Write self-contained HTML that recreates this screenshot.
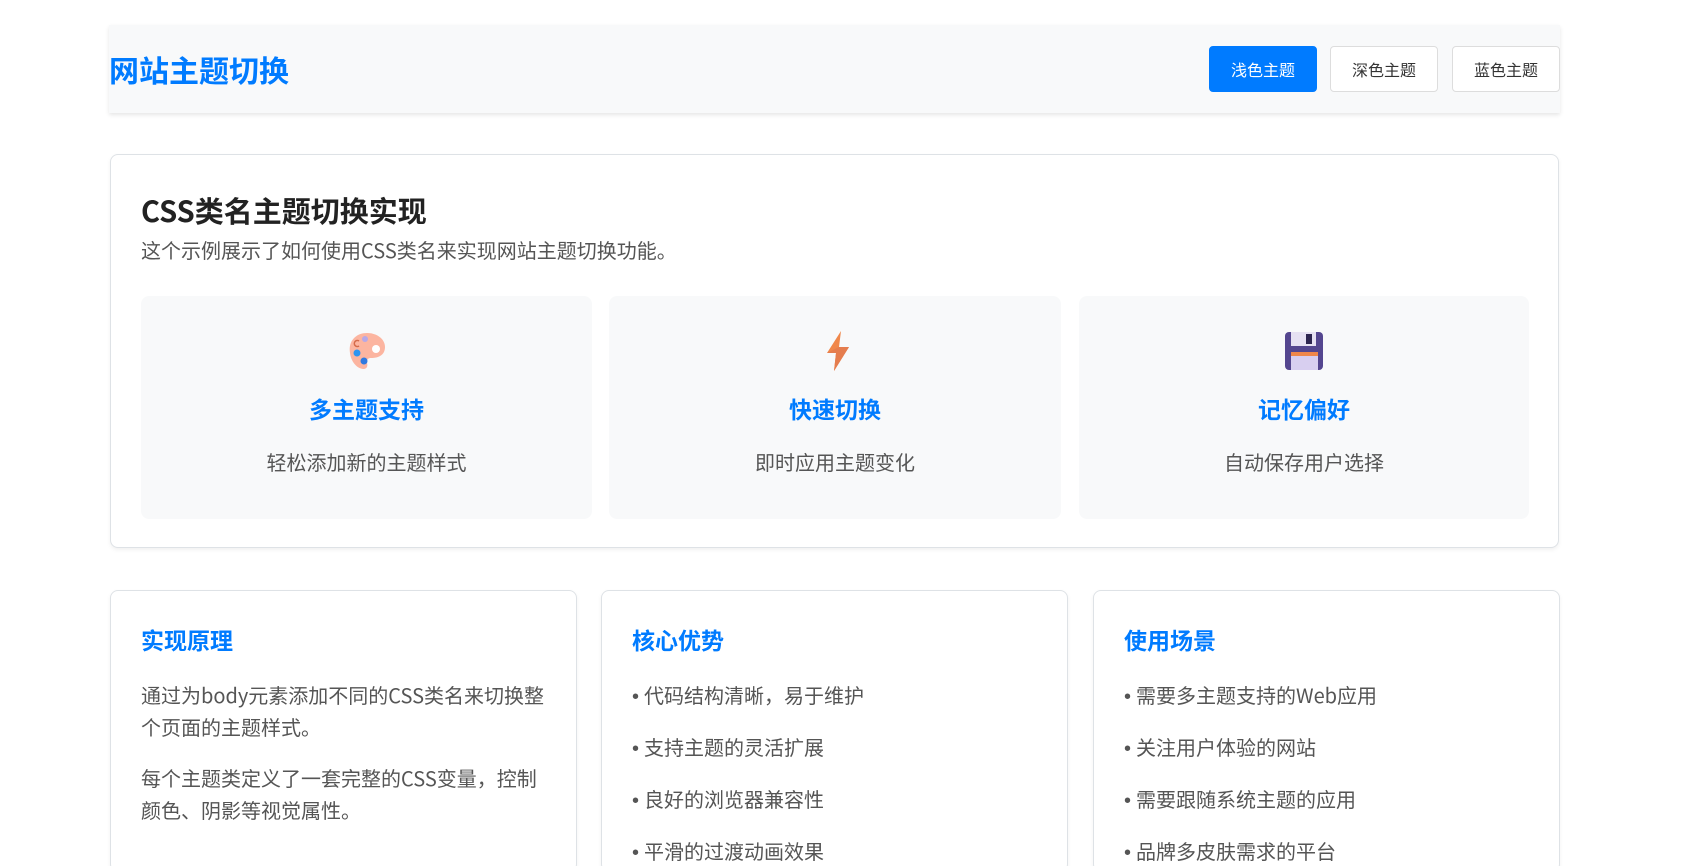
<!DOCTYPE html>
<html><head><meta charset="utf-8"><style>
*{box-sizing:border-box;margin:0;padding:0}
html{width:1681px;height:866px;overflow:hidden}
body{width:1681px;height:866px;overflow:hidden;background:#fff;font-family:"Noto Sans CJK SC","Liberation Sans",sans-serif;position:relative}
.hdr{position:absolute;left:109px;top:25px;width:1451px;height:88px;background:#f8f9fa;box-shadow:0 2px 4px rgba(0,0,0,.1)}
.hdr h1{position:absolute;left:0;top:0;line-height:88px;font-size:30px;font-weight:700;color:#007bff}
.btn{position:absolute;top:21px;height:46px;width:108px;border:1px solid #ddd;border-radius:4px;background:#fff;font-size:16px;color:#333;text-align:center;line-height:44px}
.btn.on{background:#007bff;border-color:#007bff;color:#fff}
.card{position:absolute;background:#fff;border:1px solid #dee2e6;border-radius:8px;box-shadow:0 2px 4px rgba(0,0,0,.06)}
.main{left:110px;top:154px;width:1449px;height:394px}
.main h2{position:absolute;left:30px;top:35px;font-size:29px;font-weight:700;color:#222;line-height:40px}
.main p{position:absolute;left:30px;top:81px;font-size:20px;color:#555;line-height:28px}
.f{position:absolute;top:141px;height:223px;background:#f8f9fa;border-radius:8px;text-align:center}
.f svg{position:absolute;left:50%;top:35px;margin-left:-20px}
.f h3{position:absolute;left:0;right:0;top:96px;font-size:23px;color:#007bff;font-weight:700;line-height:32px}
.f p{position:absolute;left:0;right:0;top:152px;font-size:20px;color:#555;line-height:28px}
.b{top:590px;height:282px;width:467px}
.b h3{position:absolute;left:30px;top:32px;font-size:23px;color:#007bff;font-weight:700;line-height:32px}
.b .t{position:absolute;left:30px;right:30px;top:88px;font-size:20px;color:#555;line-height:32px}
.b .t div{margin-bottom:19px}
.b ul{position:absolute;left:30px;top:88px;list-style:none;font-size:20px;color:#555;line-height:32px}
.b li{height:32px;margin-bottom:20px;white-space:nowrap}
.b li span{font-family:"Liberation Sans",sans-serif;margin-right:5px;line-height:1}
</style></head><body>
<div class="hdr"><h1>网站主题切换</h1>
<div class="btn on" style="left:1100px">浅色主题</div>
<div class="btn" style="left:1221px">深色主题</div>
<div class="btn" style="left:1343px">蓝色主题</div></div>
<div class="card main">
<h2>CSS类名主题切换实现</h2>
<p>这个示例展示了如何使用CSS类名来实现网站主题切换功能。</p>
<div class="f" style="left:30px;width:451px">
<svg width="40" height="40" viewBox="0 0 40 40"><path d="M20 2C9 2 1 10 3 22c1 8 6 15 13 16 4 0 5-3 4-6-1-3 1-5 4-5 6 0 14-2 14-11C38 8 30 2 20 2z" fill="#fcb5a0"/><circle cx="29" cy="18" r="4" fill="#fff"/><circle cx="18" cy="8" r="3" fill="#b6a8e8"/><circle cx="10" cy="22" r="3.5" fill="#2f95f0"/><circle cx="17" cy="30" r="3.5" fill="#2f7ae0"/><path d="M12 10a3 3 0 1 0 0 5" stroke="#d46a4a" fill="none" stroke-width="1.5"/></svg>
<h3>多主题支持</h3><p>轻松添加新的主题样式</p></div>
<div class="f" style="left:498px;width:452px">
<svg width="40" height="40" viewBox="0 0 40 40"><path d="M26 0L12 22h9L19 40 34 16h-10z" fill="#f0874a"/><path d="M12 22h9L19 40 34 16h-10z" fill="#e57d4e"/></svg>
<h3>快速切换</h3><p>即时应用主题变化</p></div>
<div class="f" style="left:968px;width:450px">
<svg width="40" height="40" viewBox="0 0 40 40"><rect x="1" y="1" width="38" height="38" rx="4" fill="#54468f"/><rect x="7" y="1" width="25" height="14" fill="#e6e1f2"/><rect x="22" y="3" width="6" height="10" fill="#2d2550"/><rect x="7" y="21" width="27" height="18" fill="#d8cff0"/><rect x="7" y="21" width="27" height="4" fill="#f0874a"/></svg>
<h3>记忆偏好</h3><p>自动保存用户选择</p></div>
</div>
<div class="card b" style="left:110px"><h3>实现原理</h3><div class="t"><div>通过为body元素添加不同的CSS类名来切换整个页面的主题样式。</div><div>每个主题类定义了一套完整的CSS变量，控制颜色、阴影等视觉属性。</div></div></div>
<div class="card b" style="left:601px"><h3>核心优势</h3><ul><li><span>•</span>代码结构清晰，易于维护</li><li><span>•</span>支持主题的灵活扩展</li><li><span>•</span>良好的浏览器兼容性</li><li><span>•</span>平滑的过渡动画效果</li></ul></div>
<div class="card b" style="left:1093px"><h3>使用场景</h3><ul><li><span>•</span>需要多主题支持的Web应用</li><li><span>•</span>关注用户体验的网站</li><li><span>•</span>需要跟随系统主题的应用</li><li><span>•</span>品牌多皮肤需求的平台</li></ul></div>
</body></html>
